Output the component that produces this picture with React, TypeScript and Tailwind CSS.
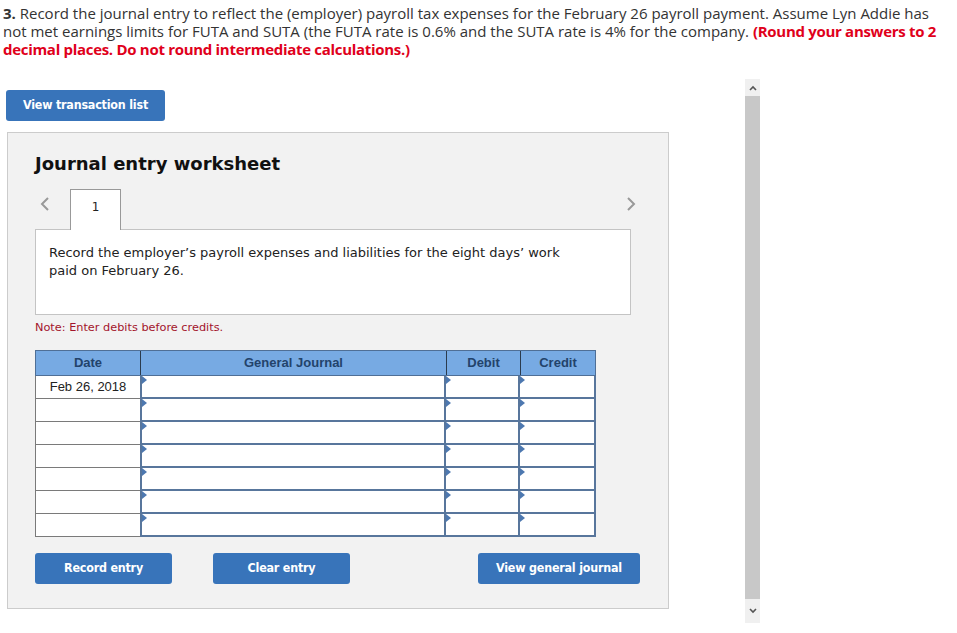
import React from "react";

const Marker = () => (
  <span className="absolute left-0 top-0 w-0 h-0 border-y-[4px] border-y-transparent border-l-[5px] border-l-[#4d78b0]" />
);

const Btn = ({ children, w, cls = "" }: { children: React.ReactNode; w: string; cls?: string }) => (
  <button
    className={`${w} ${cls} h-[31px] rounded-[3px] bg-[#3874ba] text-white text-[12.4px] font-bold flex items-center justify-center`}
    style={{ fontFamily: '"DejaVu Sans Condensed", Tahoma, sans-serif', letterSpacing: "-0.2px" }}
  >
    {children}
  </button>
);

export default function App() {
  const rows = ["Feb 26, 2018", "", "", "", "", "", ""];
  return (
    <div className="w-[957px] h-[633px] bg-white flex overflow-hidden">
      <div className="w-[745px] shrink-0">
        <div
          className="pl-[3px] pt-[4px] text-[15px] leading-[18px] text-[#333] whitespace-nowrap"
          style={{ fontFamily: '"Open Sans", "Liberation Sans", sans-serif', letterSpacing: "0px" }}
        >
          <div>
            <span className="font-bold">3.</span> Record the journal entry to reflect the (employer) payroll tax expenses for the February 26 payroll payment. Assume Lyn Addie has
          </div>
          <div>
            not met earnings limits for FUTA and SUTA (the FUTA rate is 0.6% and the SUTA rate is 4% for the company.{" "}
            <span className="font-bold text-[#e0001b] tracking-[-0.3px]">(Round your answers to 2</span>
          </div>
          <div className="font-bold text-[#e0001b] tracking-[-0.3px]">decimal places. Do not round intermediate calculations.)</div>
        </div>

        <div className="ml-[6px] mt-[32px]">
          <Btn w="w-[159px]">View transaction list</Btn>
        </div>

        <div
          className="ml-[7px] mt-[11px] w-[662px] h-[477px] bg-[#f2f2f2] border border-[#cccccc] pl-[27px]"
          style={{ fontFamily: '"DejaVu Sans", Verdana, sans-serif' }}
        >
          <div className="pt-[19px] text-[18px] leading-[24px] font-bold text-[#111]">Journal entry worksheet</div>

          <div className="mt-[13px] w-[602px] flex items-end relative">
            <svg className="absolute left-[4px] top-[7px]" width="12" height="16" viewBox="0 0 12 16">
              <path d="M9 2 L3 8 L9 14" fill="none" stroke="#999" strokeWidth="2" />
            </svg>
            <div className="ml-[35px] w-[51px] h-[41px] bg-white border border-b-0 border-[#999] -mb-px relative z-10 flex justify-center pt-[8px] text-[12px] text-[#222]">
              1
            </div>
            <svg className="absolute right-[0px] top-[7px]" width="12" height="16" viewBox="0 0 12 16">
              <path d="M3 2 L9 8 L3 14" fill="none" stroke="#999" strokeWidth="2" />
            </svg>
          </div>
          <div className="w-[596px] h-[86px] bg-white border border-[#c4c4c4] pl-[13px] pt-[14px] text-[13px] leading-[18px] text-[#222]" style={{ fontFamily: '"DejaVu Sans", Verdana, sans-serif' }}>
            Record the employer’s payroll expenses and liabilities for the eight days’ work
            <br />
            paid on February 26.
          </div>
          <div className="mt-[6px] text-[11.3px] leading-[14px] text-[#a3142b]">Note: Enter debits before credits.</div>

          <div className="mt-[15px] w-[561px]" style={{ fontFamily: '"Liberation Sans", Arial, sans-serif' }}>
            <div className="flex h-[26px] bg-[#77aae3] border border-[#4f6f96] text-[13px] font-bold text-[#23436b]">
              <div className="w-[105px] flex items-center justify-center border-r border-[#2b3b4d]">Date</div>
              <div className="w-[306px] flex items-center justify-center border-r border-[#2b3b4d]">General Journal</div>
              <div className="w-[74px] flex items-center justify-center border-r border-[#2b3b4d]">Debit</div>
              <div className="flex-1 flex items-center justify-center">Credit</div>
            </div>
            {rows.map((d, i) => (
              <div key={i} className="flex h-[23px]">
                <div className="w-[105px] bg-white border-l border-b border-[#7a7a7a] flex items-center justify-center text-[13px] text-[#222]">
                  {d}
                </div>
                <div className="w-[306px] bg-white border-2 border-t-0 border-[#58769c] relative">
                  <Marker />
                </div>
                <div className="w-[74px] bg-white border-2 border-t-0 border-l-0 border-[#58769c] relative">
                  <Marker />
                </div>
                <div className="w-[76px] bg-white border-2 border-t-0 border-l-0 border-[#58769c] relative">
                  <Marker />
                </div>
              </div>
            ))}
          </div>

          <div className="mt-[16px] flex">
            <Btn w="w-[137px]">Record entry</Btn>
            <Btn w="w-[137px]" cls="ml-[41px]">Clear entry</Btn>
            <Btn w="w-[162px]" cls="ml-[128px]">View general journal</Btn>
          </div>
        </div>
      </div>

      <div className="w-[15px] mt-[79px] h-[544px] flex flex-col bg-[#f0f0f0]">
        <div className="h-[17px] flex items-center justify-center">
          <svg width="8" height="6" viewBox="0 0 8 6">
            <path d="M1 5 L4 2 L7 5" fill="none" stroke="#555" strokeWidth="1.6" />
          </svg>
        </div>
        <div className="flex-1 bg-[#c8c8c8]" />
        <div className="h-[24px] flex items-center justify-center">
          <svg width="8" height="6" viewBox="0 0 8 6">
            <path d="M1 1 L4 4 L7 1" fill="none" stroke="#555" strokeWidth="1.6" />
          </svg>
        </div>
      </div>
    </div>
  );
}
